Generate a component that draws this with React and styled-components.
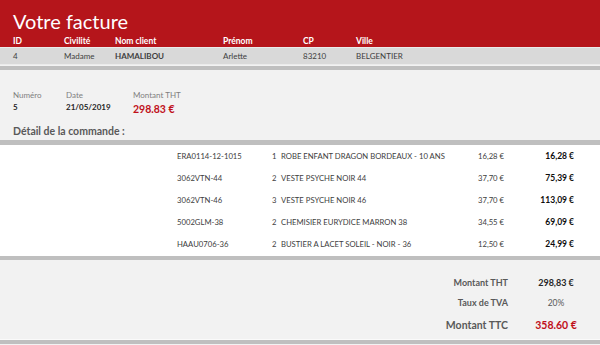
import React from 'react';
import styled, { createGlobalStyle } from 'styled-components';

const GlobalStyle = createGlobalStyle`
  html, body {
    margin: 0;
    padding: 0;
    background: #f2f2f2;
    font-family: Lato, "Liberation Sans", sans-serif;
    color: #404040;
  }
`;

const Page = styled.div`
  width: 600px;
  height: 345px;
  overflow: hidden;
  background: #f2f2f2;
`;

const Header = styled.header`
  background: #b5151b;
  height: 47px;
  display: flex;
  flex-direction: column;
  border-bottom: 1px solid #ebebeb;
`;

const Title = styled.h1`
  margin: 0;
  padding: 8px 0 0 13px;
  height: 29px;
  font-size: 20px;
  font-weight: 400;
  line-height: 26px;
  color: #fff;
`;

const ClientGrid = styled.div`
  display: grid;
  grid-template-columns: 51px 51px 108px 80px 53px 1fr;
  padding-left: 13px;
  align-items: center;
  height: ${p => p.$h}px;
  font-size: ${p => (p.$head ? 8.5 : 8)}px;
  color: ${p => (p.$head ? '#fff' : '#404040')};
  font-weight: ${p => (p.$head ? 700 : 400)};
  background: ${p => (p.$head ? 'transparent' : '#d9d9d9')};
  border-bottom: ${p => (p.$head ? 'none' : '1px solid #ebebeb')};
`;

const Cell = styled.span`
  font-weight: ${p => (p.$bold ? 700 : 'inherit')};
  white-space: nowrap;
`;

const Stripe = styled.div`
  height: ${p => p.$h || 4}px;
  background: #bfbfbf;
  margin-top: ${p => p.$gap || 0}px;
`;

const Info = styled.section`
  display: flex;
  padding: 20px 0 0 13px;
  height: 32px;
`;

const InfoCol = styled.div`
  width: ${p => p.$w}px;
  display: flex;
  flex-direction: column;
  gap: 1px;
`;

const InfoLabel = styled.span`
  font-size: 8px;
  color: #7f7f7f;
  line-height: 11px;
`;

const InfoValue = styled.span`
  font-size: ${p => (p.$big ? 10.5 : 8)}px;
  font-weight: 700;
  line-height: ${p => (p.$big ? 14 : 11)}px;
  color: ${p => (p.$red ? '#c0101a' : '#262626')};
`;

const SectionTitle = styled.h2`
  margin: 0;
  padding-left: 13px;
  height: 18px;
  font-size: 10.5px;
  font-weight: 700;
  color: #595959;
  line-height: 19px;
`;

const Lines = styled.div`
  background: #fff;
  padding-bottom: 1px;
`;

const LineRow = styled.div`
  display: grid;
  grid-template-columns: 95px 9px 197px 36px 60px;
  padding-left: 177px;
  height: 22px;
  align-items: center;
  font-size: 7.7px;
  color: #404040;
  white-space: nowrap;
`;

const Total = styled.span`
  justify-self: end;
  font-size: 8.5px;
  font-weight: 700;
  color: #0d0d0d;
`;

const Totals = styled.section`
  display: grid;
  grid-template-columns: 200px 60px;
  column-gap: 18px;
  justify-content: end;
  padding: 12px 14px 0 0;
  height: 67px;
  border-bottom: 1px solid #fafafa;
  align-items: center;
  align-content: start;
`;

const TotLabel = styled.span`
  justify-self: end;
  font-size: ${p => p.$size}px;
  font-weight: 700;
  color: #595959;
  height: ${p => p.$h}px;
  line-height: ${p => p.$h}px;
`;

const TotValue = styled.span`
  justify-self: center;
  font-size: ${p => p.$size}px;
  font-weight: ${p => (p.$light ? 400 : 700)};
  color: ${p => (p.$red ? '#c0101a' : p.$light ? '#595959' : '#262626')};
  height: ${p => p.$h}px;
  line-height: ${p => p.$h}px;
`;

const client = [
  ['ID', '4'],
  ['Civilité', 'Madame'],
  ['Nom client', 'HAMALIBOU', true],
  ['Prénom', 'Arlette'],
  ['CP', '83210'],
  ['Ville', 'BELGENTIER'],
];

const lines = [
  ['ERA0114-12-1015', 1, 'ROBE ENFANT DRAGON BORDEAUX - 10 ANS', '16,28 €', '16,28 €'],
  ['3062VTN-44', 2, 'VESTE PSYCHE NOIR 44', '37,70 €', '75,39 €'],
  ['3062VTN-46', 3, 'VESTE PSYCHE NOIR 46', '37,70 €', '113,09 €'],
  ['5002GLM-38', 2, 'CHEMISIER EURYDICE MARRON 38', '34,55 €', '69,09 €'],
  ['HAAU0706-36', 2, 'BUSTIER A LACET SOLEIL - NOIR - 36', '12,50 €', '24,99 €'],
];

export default function App() {
  return (
    <Page>
      <GlobalStyle />
      <Header>
        <Title>Votre facture</Title>
        <ClientGrid $head $h={18}>
          {client.map(([label]) => (
            <Cell key={label}>{label}</Cell>
          ))}
        </ClientGrid>
      </Header>
      <ClientGrid $h={16}>
        {client.map(([label, value, bold]) => (
          <Cell key={label} $bold={bold}>{value}</Cell>
        ))}
      </ClientGrid>
      <Stripe $gap={1} />

      <Info>
        <InfoCol $w={53}>
          <InfoLabel>Numéro</InfoLabel>
          <InfoValue>5</InfoValue>
        </InfoCol>
        <InfoCol $w={67}>
          <InfoLabel>Date</InfoLabel>
          <InfoValue>21/05/2019</InfoValue>
        </InfoCol>
        <InfoCol $w={120}>
          <InfoLabel>Montant THT</InfoLabel>
          <InfoValue $big $red>298.83 €</InfoValue>
        </InfoCol>
      </Info>
      <SectionTitle>Détail de la commande :</SectionTitle>
      <Stripe $h={5} />

      <Lines>
        {lines.map(([ref, qty, desc, unit, total]) => (
          <LineRow key={ref}>
            <span>{ref}</span>
            <span>{qty}</span>
            <span>{desc}</span>
            <span>{unit}</span>
            <Total>{total}</Total>
          </LineRow>
        ))}
      </Lines>
      <Stripe />

      <Totals>
        <TotLabel $size={9} $h={22}>Montant THT</TotLabel>
        <TotValue $size={9} $h={22}>298,83 €</TotValue>
        <TotLabel $size={9} $h={18}>Taux de TVA</TotLabel>
        <TotValue $size={8.5} $h={18} $light>20%</TotValue>
        <TotLabel $size={10.5} $h={26}>Montant TTC</TotLabel>
        <TotValue $size={10.5} $h={26} $red>358.60 €</TotValue>
      </Totals>
      <Stripe />
    </Page>
  );
}
